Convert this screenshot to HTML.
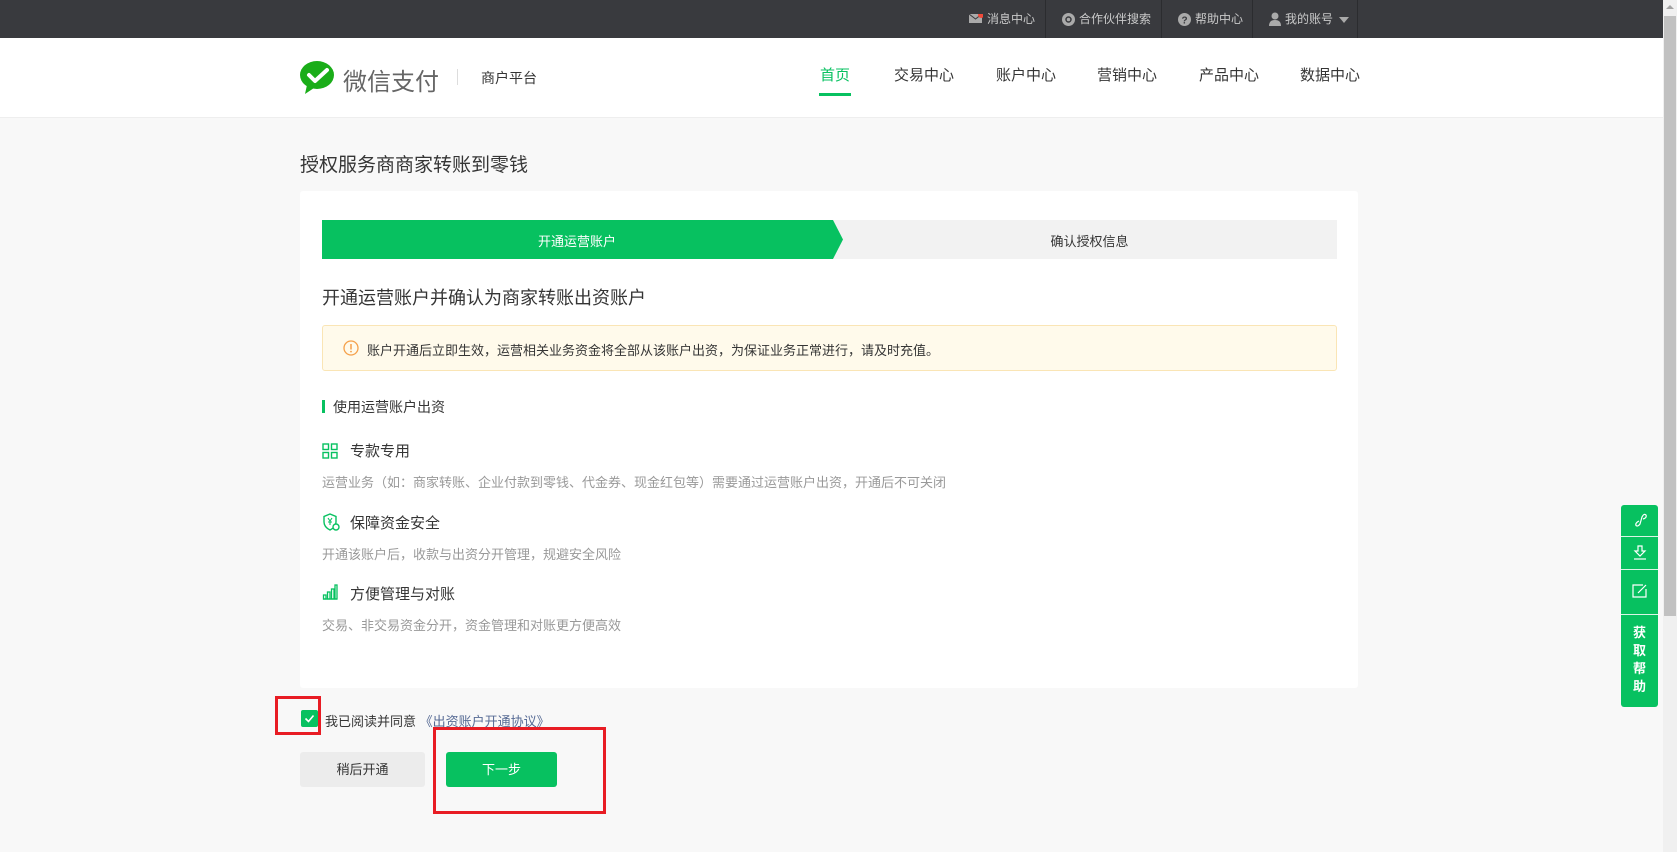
<!DOCTYPE html>
<html><head><meta charset="utf-8"><style>
*{margin:0;padding:0;box-sizing:border-box}
body{width:1677px;height:852px;overflow:hidden;background:#f8f8f8;font-family:"Liberation Sans","Noto Sans CJK SC",sans-serif;position:relative;color:#353535}
.abs{position:absolute}
.top{left:0;top:0;width:1663px;height:38px;background:#393a3e}
.top .it{position:absolute;top:0;height:38px;line-height:38px;color:#c9c9c9;font-size:12px;border-left:1px solid #2b2c2f;padding-left:22px}
.hdr{left:0;top:38px;width:1663px;height:80px;background:#fff;border-bottom:1px solid #eee}
.nav{position:absolute;top:64px;font-size:15px;color:#353535}
.card{left:300px;top:191px;width:1058px;height:497px;background:#fff;border-radius:3px}
.g{color:#07c160}
.desc{font-size:13px;color:#999}
.h4{font-size:15px;color:#353535}
</style></head><body>
<div class="abs top">
 <div class="it" style="left:951px;width:94px;border-left:none">
  <svg class="abs" style="left:18px;top:14px" width="14" height="10"><rect width="13" height="9" fill="#aaa"/><path d="M0 0 L6.5 5 L13 0" stroke="#393a3e" fill="none"/><circle cx="12" cy="1" r="3" fill="#f04a3a"/></svg>
  <span style="margin-left:14px">消息中心</span></div>
 <div class="it" style="left:1045px;width:116px"><svg class="abs" style="left:16px;top:13px" width="13" height="13"><circle cx="6.5" cy="6.5" r="6.5" fill="#aaa"/><circle cx="6.5" cy="6.5" r="2.5" fill="none" stroke="#393a3e" stroke-width="1.5"/></svg><span style="margin-left:11px">合作伙伴搜索</span></div>
 <div class="it" style="left:1161px;width:91px"><svg class="abs" style="left:16px;top:13px" width="13" height="13"><circle cx="6.5" cy="6.5" r="6.5" fill="#aaa"/><text x="6.5" y="10.5" font-size="10" text-anchor="middle" fill="#393a3e" font-weight="bold">?</text></svg><span style="margin-left:11px">帮助中心</span></div>
 <div class="it" style="left:1252px;width:106px;border-right:1px solid #2b2c2f"><svg class="abs" style="left:16px;top:12px" width="12" height="14"><circle cx="6" cy="4" r="3.5" fill="#aaa"/><path d="M0 14 Q0 8 6 8 Q12 8 12 14Z" fill="#aaa"/></svg><span style="margin-left:10px">我的账号</span><svg class="abs" style="left:86px;top:17px" width="10" height="6"><path d="M0 0H10L5 6Z" fill="#aaa"/></svg></div>
</div>
<div class="abs hdr"></div>
<svg class="abs" style="left:300px;top:60px" width="36" height="36" viewBox="0 0 36 36"><ellipse cx="17" cy="15" rx="17" ry="14" fill="#1aad19"/><path d="M7 25 L5 34 L14 28Z" fill="#1aad19"/><path d="M9 15 L15 21 L27 10" stroke="#fff" stroke-width="4" fill="none" stroke-linecap="round" stroke-linejoin="round"/></svg>
<div class="abs" style="left:343px;top:62px;font-size:24px;color:#666">微信支付</div>
<div class="abs" style="left:457px;top:69px;width:1px;height:16px;background:#ddd"></div>
<div class="abs" style="left:481px;top:68px;font-size:14px;color:#353535">商户平台</div>
<div class="nav g" style="left:820px">首页</div>
<div class="abs" style="left:819px;top:93px;width:32px;height:3px;background:#07c160"></div>
<div class="nav" style="left:894px">交易中心</div>
<div class="nav" style="left:996px">账户中心</div>
<div class="nav" style="left:1097px">营销中心</div>
<div class="nav" style="left:1199px">产品中心</div>
<div class="nav" style="left:1300px">数据中心</div>

<div class="abs" style="left:300px;top:150px;font-size:19px;color:#353535">授权服务商商家转账到零钱</div>
<div class="abs card"></div>
<div class="abs" style="left:322px;top:220px;width:1015px;height:39px;background:#f2f2f2"></div>
<svg class="abs" style="left:322px;top:220px" width="521" height="39"><path d="M0 0H511L521 19.5L511 39H0Z" fill="#07c160"/></svg>
<div class="abs" style="left:322px;top:231px;width:510px;text-align:center;font-size:13px;color:#fff">开通运营账户</div>
<div class="abs" style="left:842px;top:231px;width:495px;text-align:center;font-size:13px;color:#353535">确认授权信息</div>
<div class="abs" style="left:322px;top:284px;font-size:18px">开通运营账户并确认为商家转账出资账户</div>
<div class="abs" style="left:322px;top:325px;width:1015px;height:46px;background:#fffaeb;border:1px solid #fae5b5;border-radius:3px"></div>
<svg class="abs" style="left:343px;top:340px" width="16" height="16"><circle cx="8" cy="8" r="7" fill="none" stroke="#f5a04a" stroke-width="1.3"/><path d="M8 4V9.5" stroke="#f5a04a" stroke-width="1.5"/><circle cx="8" cy="11.6" r="0.9" fill="#f5a04a"/></svg>
<div class="abs" style="left:367px;top:340px;font-size:13px;color:#353535">账户开通后立即生效，运营相关业务资金将全部从该账户出资，为保证业务正常进行，请及时充值。</div>
<div class="abs" style="left:322px;top:400px;width:3px;height:13px;background:#07c160"></div>
<div class="abs" style="left:333px;top:397px;font-size:14px">使用运营账户出资</div>

<svg class="abs" style="left:322px;top:443px" width="16" height="16" fill="none" stroke="#07c160" stroke-width="1.4"><rect x="1" y="1" width="5.5" height="5.5"/><rect x="9.5" y="1" width="5.5" height="5.5"/><rect x="1" y="9.5" width="5.5" height="5.5"/><rect x="9.5" y="9.5" width="5.5" height="5.5"/></svg>
<div class="abs h4" style="left:350px;top:440px">专款专用</div>
<div class="abs desc" style="left:322px;top:472px">运营业务（如：商家转账、企业付款到零钱、代金券、现金红包等）需要通过运营账户出资，开通后不可关闭</div>

<svg class="abs" style="left:322px;top:513px" width="18" height="18" fill="none" stroke="#07c160" stroke-width="1.4"><path d="M8 1L14 3.5V9Q14 14 8 17Q2 14 2 9V3.5Z"/><path d="M6 5L8 8L10 5M8 8V12M6 9H10" stroke-width="1.1"/><circle cx="14" cy="14" r="3" fill="#fff"/></svg>
<div class="abs h4" style="left:350px;top:512px">保障资金安全</div>
<div class="abs desc" style="left:322px;top:544px">开通该账户后，收款与出资分开管理，规避安全风险</div>

<svg class="abs" style="left:322px;top:584px" width="16" height="16" fill="none" stroke="#07c160" stroke-width="1.3"><path d="M1 15H15"/><rect x="1.5" y="11" width="2.5" height="4"/><rect x="5.5" y="8" width="2.5" height="7"/><rect x="9.5" y="5" width="2.5" height="10"/><rect x="13" y="1" width="2" height="14"/></svg>
<div class="abs h4" style="left:350px;top:583px">方便管理与对账</div>
<div class="abs desc" style="left:322px;top:615px">交易、非交易资金分开，资金管理和对账更方便高效</div>

<div class="abs" style="left:301px;top:710px;width:17px;height:17px;background:#07c160;border-radius:2px"></div>
<svg class="abs" style="left:301px;top:710px" width="17" height="17"><path d="M4.5 8.5L7.5 11.5L12.5 5.5" stroke="#fff" stroke-width="1.6" fill="none"/></svg>
<div class="abs" style="left:275px;top:696px;width:46px;height:39px;border:3px solid #e81c24"></div>
<div class="abs" style="left:325px;top:711px;font-size:13px">我已阅读并同意 <span style="color:#576b95">《出资账户开通协议》</span></div>
<div class="abs" style="left:300px;top:752px;width:125px;height:35px;background:#ececec;border-radius:3px;text-align:center;line-height:35px;font-size:13px">稍后开通</div>
<div class="abs" style="left:446px;top:752px;width:111px;height:35px;background:#07c160;border-radius:3px;text-align:center;line-height:35px;font-size:13px;color:#fff">下一步</div>
<div class="abs" style="left:433px;top:727px;width:173px;height:87px;border:3px solid #e81c24"></div>

<div class="abs" style="left:1621px;top:505px;width:37px;height:202px;background:#07c160;border-radius:3px"></div>
<div class="abs" style="left:1621px;top:536px;width:37px;height:1px;background:#d9f5e5"></div>
<div class="abs" style="left:1621px;top:569px;width:37px;height:1px;background:#d9f5e5"></div>
<div class="abs" style="left:1621px;top:614px;width:37px;height:1px;background:#d9f5e5"></div>
<svg class="abs" style="left:1633px;top:512px" width="14" height="16" fill="none" stroke="#fff" stroke-width="1.2"><path d="M6 9Q2 11 3 13.5Q5 15 7 12L9 5Q11 1 13 3Q14 6 10 7"/></svg>
<svg class="abs" style="left:1633px;top:545px" width="14" height="16" fill="none" stroke="#fff" stroke-width="1.2"><path d="M5 1H9V6H12L7 11L2 6H5Z"/><path d="M1 14H13"/></svg>
<svg class="abs" style="left:1632px;top:583px" width="16" height="16" fill="none" stroke="#fff" stroke-width="1.2"><path d="M11 2H1V14H14V6"/><path d="M6 10L14 2"/></svg>
<div class="abs" style="left:1621px;top:624px;width:37px;text-align:center;color:#fff;font-size:13px;line-height:18px;font-weight:bold">获<br>取<br>帮<br>助</div>

<div class="abs" style="left:1663px;top:0;width:14px;height:852px;background:#f0f0f0"></div>
<div class="abs" style="left:1664px;top:16px;width:12px;height:600px;background:#c1c1c1"></div>
<svg class="abs" style="left:1665px;top:4px" width="10" height="6"><path d="M1 5L5 1L9 5Z" fill="#a3a3a3"/></svg>
</body></html>
